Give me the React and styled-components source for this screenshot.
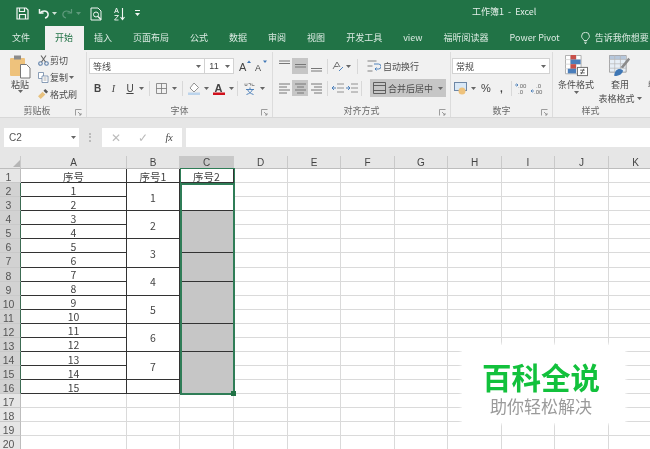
import React from 'react';
import styled, {createGlobalStyle} from 'styled-components';

const GlobalStyle = createGlobalStyle`
html, body {
    margin: 0;
    padding: 0;
    width: 650px;
    height: 449px;
    overflow: hidden;
    background: #fff;
    font-family: "Noto Sans CJK SC", "Liberation Sans", sans-serif;
}
`

const Page = styled.div`
position: relative;
width: 650px;
height: 449px;
overflow: hidden;
display: flex;
flex-direction: column;
filter: blur(0.35px);
`

/* title bar */
const TitleBar = styled.div`
height: 25px;
background: #217346;
display: flex;
align-items: center;
padding: 2px 0 0 15px;
box-sizing: border-box;
color: #e4efe9;
font-size: 9px;
flex-shrink: 0;
`
const QuickSlot = styled.div`
width: ${({w}) => w}px;
height: 14px;
display: flex;
align-items: center;
justify-content: center;
flex-shrink: 0;
`
const Title = styled.div`
margin: 0 0 5px 327px;
white-space: pre;
line-height: 13px;
`

/* tabs */
const TabBar = styled.div`
height: 25px;
background: #217346;
display: flex;
align-items: flex-end;
padding-left: 1.5px;
flex-shrink: 0;
overflow: hidden;
`
const Tab = styled.div`
height: 24px;
line-height: 22px;
padding: 0 10.5px;
font-size: 9px;
white-space: nowrap;
flex-shrink: 0;
margin-right: ${({gap}) => gap || 0}px;
background: ${({active}) => active ? '#f1f1f1' : 'transparent'};
color: ${({active}) => active ? '#217346' : '#dcebe3'};
display: flex;
align-items: center;
gap: 5px;
`

/* ribbon */
const Ribbon = styled.div`
height: 68px;
background: #f1f1f1;
border-bottom: 1px solid #d8d8d8;
box-sizing: border-box;
display: flex;
flex-shrink: 0;
overflow: hidden;
color: #4c4c4c;
font-size: 9px;
`
const Group = styled.div`
width: ${({w}) => w}px;
flex-shrink: 0;
box-sizing: border-box;
border-right: ${({last}) => last ? 'none' : '1px solid #dcdcdc'};
margin-top: 2px;
display: flex;
flex-direction: column;
`
const GroupBody = styled.div`
flex: 1;
display: ${({inline}) => inline ? 'flex' : 'block'};
padding-left: ${({left}) => left || 0}px;
padding-top: ${({top}) => top ?? 6}px;
min-height: 0;
`
const GroupLabel = styled.div`
height: 13px;
line-height: 13px;
font-size: 9px;
color: #6a6a6a;
display: flex;
justify-content: center;
position: relative;
padding-right: ${({shift}) => shift || 0}px;
`
const Launcher = styled.svg`
position: absolute;
right: 4px;
top: 5px;
`
const PasteColumn = styled.div`
width: 22px;
display: flex;
flex-direction: column;
align-items: center;
line-height: 11px;
`
const CopyColumn = styled.div`
margin-left: 7px;
display: flex;
flex-direction: column;
gap: 4px;
margin-top: -1px;
`
const CopyRow = styled.div`
height: 13px;
display: flex;
align-items: center;
gap: 1px;
white-space: nowrap;
`
const ToolRow = styled.div`
height: ${({h}) => h || 16}px;
display: flex;
align-items: center;
margin-top: ${({mt}) => mt || 0}px;
margin-left: ${({ml}) => ml || 0}px;
`
const Combo = styled.div`
width: ${({w}) => w}px;
height: 16px;
background: #fff;
border: 1px solid #d2d2d2;
box-sizing: border-box;
margin-left: -1px;
display: flex;
align-items: center;
justify-content: space-between;
padding: 0 3px;
font-size: 9px;
flex-shrink: 0;
`
const Slot = styled.div`
width: ${({w}) => w || 16}px;
height: ${({h}) => h || 16}px;
display: flex;
align-items: center;
justify-content: center;
flex-shrink: 0;
background: ${({on}) => on ? '#c6c6c6' : 'transparent'};
font-family: ${({serif}) => serif ? '"Liberation Serif", serif' : '"Liberation Sans", sans-serif'};
font-size: ${({fs}) => fs || 10}px;
font-weight: ${({bold}) => bold ? 700 : 400};
font-style: ${({italic}) => italic ? 'italic' : 'normal'};
text-decoration: ${({under}) => under ? 'underline' : 'none'};
color: ${({faint}) => faint ? '#bbb' : '#444'};
`
const Sep = styled.div`
width: 1px;
height: 15px;
background: #d8d8d8;
margin: 0 ${({m}) => m ?? 3}px;
flex-shrink: 0;
`
const TextTool = styled.div`
display: flex;
align-items: center;
gap: 2px;
white-space: nowrap;
margin-left: ${({ml}) => ml || 0}px;
`
const MergeButton = styled.div`
width: 76px;
height: 18px;
background: #c6c6c6;
margin-left: 6px;
display: flex;
align-items: center;
gap: 2px;
padding-left: 3px;
box-sizing: border-box;
white-space: nowrap;
flex-shrink: 0;
`
const BigTool = styled.div`
width: ${({w}) => w}px;
flex-shrink: 0;
display: flex;
flex-direction: column;
align-items: center;
line-height: 11.5px;
white-space: nowrap;
`
const BigLabel = styled.div`
margin-top: 2px;
display: flex;
align-items: center;
gap: 2px;
`

/* formula bar */
const FormulaArea = styled.div`
height: 38px;
background: #e6e6e6;
display: flex;
padding: 10px 0 0 4px;
box-sizing: border-box;
flex-shrink: 0;
`
const FormulaBox = styled.div`
height: 19px;
background: #fff;
display: flex;
align-items: center;
box-sizing: border-box;
width: ${({w}) => w}px;
margin-left: ${({ml}) => ml || 0}px;
flex-grow: ${({grow}) => grow ? 1 : 0};
`
const NameText = styled.div`
flex: 1;
padding-left: 5px;
font: 10px "Liberation Sans", sans-serif;
color: #555;
`
const Grip = styled.div`
width: 2px;
height: 9px;
margin: 5px 0 0 10px;
border-left: 2px dotted #bbb;
`

/* sheet */
const Sheet = styled.div`
position: relative;
flex: 1;
display: grid;
grid-template-columns: 21px 106px 53px 54px 54px 53px 54px 53px 54px 53px 54px 54px;
grid-auto-rows: 14.08px;
grid-template-rows: 13px;
background: #fff;
font-family: "Noto Sans CJK SC", "Liberation Sans", sans-serif;
overflow: hidden;
`
const ColHead = styled.div`
background: ${({on}) => on ? '#c8c8c8' : '#e6e6e6'};
border-right: 1px solid #c9c9c9;
border-bottom: 1px solid #bdbdbd;
box-sizing: border-box;
text-align: center;
font: 10px/14px "Liberation Sans", sans-serif;
color: #444;
`
const RowHead = styled.div`
background: ${({on}) => on ? '#d2d2d2' : '#e6e6e6'};
border-right: 1px solid ${({on}) => on ? '#3c6b52' : '#bdbdbd'};
border-bottom: 1px solid #c9c9c9;
box-sizing: border-box;
text-align: center;
padding: 1px 3px 0 0;
font: 10.5px/14px "Liberation Sans", sans-serif;
color: #555;
`
const Cell = styled.div`
grid-row: ${({span}) => span ? `span ${span}` : 'auto'};
box-sizing: border-box;
border-right: 1px solid ${({boxed}) => boxed ? '#333' : '#dadada'};
border-bottom: 1px solid ${({boxed}) => boxed ? '#333' : '#dadada'};
background: ${({fill}) => fill ? '#c6c6c6' : '#fff'};
display: flex;
align-items: center;
justify-content: center;
padding-top: 1px;
font-size: 10.5px;
line-height: 13px;
color: #444;
`
const Corner = styled.svg`
display: block;
margin: 4px 0 0 13px;
`
const Selection = styled.div`
position: absolute;
left: 180px;
top: 27px;
width: 55px;
height: 212px;
box-sizing: border-box;
border: 2px solid #2f7d57;
pointer-events: none;
`
const ColumnOutline = styled.div`
position: absolute;
left: 180px;
top: 12px;
width: 55px;
height: 16px;
box-sizing: border-box;
border: 1px solid #2f7d57;
pointer-events: none;
`
const Handle = styled.div`
position: absolute;
right: -3px;
bottom: -3px;
width: 5px;
height: 5px;
background: #217346;
`

/* watermark */
const Watermark = styled.div`
position: absolute;
left: 462px;
top: 345px;
width: 163px;
height: 78px;
padding-right: 5px;
box-sizing: border-box;
background: #fff;
box-shadow: 0 0 3px 1px #fff;
display: flex;
flex-direction: column;
align-items: center;
`
const BrandName = styled.div`
margin-top: 14px;
font-size: 29.5px;
line-height: 34px;
font-weight: 700;
color: #12c13c;
`
const BrandSlogan = styled.div`
margin-top: 3px;
font-size: 17px;
line-height: 20px;
color: #9a9a9a;
`

const Caret = ({color = '#666'}) => (
    <svg width="5" height="3" viewBox="0 0 5 3"><path d="M0 0h5L2.5 3z" fill={color}/></svg>
);

const SaveIcon = () => (
    <svg width="13" height="13" viewBox="0 0 13 13" fill="none" stroke="#f1f6f3" strokeWidth="1.2">
        <path d="M1 1h9l2 2v9H1z"/><path d="M3.5 1v3.5h5V1M3.5 12V7.5h6V12"/>
    </svg>
);
const UndoIcon = ({color}) => (
    <svg width="12" height="11" viewBox="0 0 12 11" fill="none" stroke={color} strokeWidth="1.5">
        <path d="M1.5 1v4h4"/><path d="M2 5c2-2.5 7-3 8 .5.6 2.4-1 4-3 4.5"/>
    </svg>
);
const RedoIcon = ({color}) => (
    <svg width="12" height="11" viewBox="0 0 12 11" fill="none" stroke={color} strokeWidth="1.2">
        <path d="M10.5 1v4h-4"/><path d="M10 5C8 2.5 3 2 2 5.500c-.6 2.400 1 4 3 4.500"/>
    </svg>
);
const PreviewIcon = () => (
    <svg width="13" height="14" viewBox="0 0 13 14" fill="none" stroke="#f1f6f3" strokeWidth="1">
        <path d="M1 1h7l3 3v9H1z"/><circle cx="6" cy="7.500" r="2.500"/><path d="M8 9.500l3 3" strokeWidth="1.500"/>
    </svg>
);
const SortIcon = () => (
    <svg width="13" height="14" viewBox="0 0 13 14" fill="none" stroke="#f1f6f3" strokeWidth="0.9">
        <path d="M1.500 6l2-5 2 5M2.200 4.300h2.600M1.500 8.500h4l-4 4.500h4"/><path d="M9.500 1v11M7.500 10l2 2.500 2-2.500" strokeWidth="1.100"/>
    </svg>
);
const CustomizeIcon = () => (
    <svg width="5" height="7" viewBox="0 0 5 7" fill="#f1f6f3"><path d="M0 0h5v1H0zM0 3h5L2.500 6z"/></svg>
);
const BulbIcon = () => (
    <svg width="9" height="12" viewBox="0 0 9 12" fill="none" stroke="#e4efe9" strokeWidth="0.9">
        <path d="M3 8.500C2.500 7 .6 6.200.6 4.200a3.900 3.900 0 0 1 7.800 0C8.400 6.200 6.500 7 6 8.500zM3.200 10.200h2.600M3.800 11.500h1.400"/>
    </svg>
);
const PasteIcon = () => (
    <svg width="21" height="24" viewBox="0 0 21 24">
        <rect x="0" y="3" width="15" height="18" rx="1" fill="#eec27c"/>
        <rect x="4" y="0.500" width="7" height="4" fill="#8c8c8c"/>
        <path d="M10.500 9.500h6l3.500 3.500v10h-9.500z" fill="#fff" stroke="#777" strokeWidth="1"/>
    </svg>
);
const ScissorsIcon = () => (
    <svg width="11" height="11" viewBox="0 0 11 11" fill="none" stroke="#5c7ea8" strokeWidth="1.100">
        <circle cx="2.500" cy="8.500" r="1.800"/><circle cx="8.500" cy="8.500" r="1.800"/><path d="M3.500 7L8 .5M7.500 7L3 .5" stroke="#666"/>
    </svg>
);
const CopyIcon = () => (
    <svg width="11" height="11" viewBox="0 0 11 11" fill="#fff" stroke="#6d87a6" strokeWidth="0.800">
        <path d="M.5.500h5v6h-5z"/><path d="M4 4h6v6.500H4z"/><path d="M5.500 6h3M5.500 8h3" stroke="#999"/>
    </svg>
);
const BrushIcon = () => (
    <svg width="11" height="11" viewBox="0 0 12 12">
        <path d="M0 8l5-5 3 3-5 5z" fill="#e8c27f"/><path d="M6 2l2-2 3 3-2 2z" fill="#555"/>
    </svg>
);
const LauncherIcon = () => (
    <Launcher width="7" height="7" viewBox="0 0 7 7" fill="none" stroke="#888" strokeWidth="0.800">
        <path d="M.5 6.500v-6h6"/><path d="M3 3l3 3M6 4v2H4"/>
    </Launcher>
);
const GrowFont = ({up}) => (
    <svg width="14" height="12" viewBox="0 0 14 12">
        <text x="1" y="11" fontSize={up ? 11 : 9} fontFamily="Liberation Sans" fill="#444">A</text>
        <path d={up ? 'M9 3l2-2.500L13 3z' : 'M9 .5h4l-2 2.500z'} fill="#3f77b5"/>
    </svg>
);
const BorderIcon = () => (
    <svg width="11" height="11" viewBox="0 0 11 11" fill="none" stroke="#777" strokeWidth="0.800">
        <path d="M.5.500h10v10H.5zM5.500.5v10M.5 5.500h10"/>
    </svg>
);
const FillIcon = () => (
    <svg width="13" height="13" viewBox="0 0 13 13">
        <path d="M6 1l4.500 4.500L6 10 2 6z" fill="#fff" stroke="#777" strokeWidth="0.800"/>
        <rect x="0" y="10.500" width="12" height="2.500" fill="#bcd4ec"/>
    </svg>
);
const FontColorIcon = () => (
    <svg width="12" height="13" viewBox="0 0 12 13">
        <text x="1.500" y="9.500" fontSize="11" fontFamily="Liberation Sans" fontWeight="700" fill="#444">A</text>
        <rect x="0" y="10.500" width="12" height="2.500" fill="#d0101c"/>
    </svg>
);
const PhoneticIcon = () => (
    <svg width="12" height="13" viewBox="0 0 12 13" fill="none" stroke="#3f77b5" strokeWidth="0.900">
        <path d="M1 1.500v2h2v-2M4.500 1.500h2v2M8 1.500v2h2.500" stroke="#888"/><path d="M6 5.500v1.500M2 7.500h8M3.500 7.500c1 2.500 3 4 6 5M8.500 7.500c-1 2.500-3 4-6 5"/>
    </svg>
);
const AlignLines = ({rows}) => (
    <svg width="11" height="12" viewBox="0 0 11 12" stroke="#777" strokeWidth="1">
        {rows.map(([x1, x2, y]) => <line key={y} x1={x1} x2={x2} y1={y} y2={y}/>)}
    </svg>
);
const OrientIcon = () => (
    <svg width="12" height="12" viewBox="0 0 12 12" fill="none" stroke="#666" strokeWidth="0.900">
        <path d="M1 9l4-7 3 5M2.500 6.500l4 0"/><path d="M7 11l4-4" stroke="#3f77b5"/>
    </svg>
);
const WrapIcon = () => (
    <svg width="14" height="12" viewBox="0 0 14 12" fill="none" stroke="#777" strokeWidth="0.900">
        <path d="M.5 1h9M.5 6h5M.5 11h5"/><path d="M8 9h3.500a1.500 1.500 0 0 0 0-5H7M9.500 7.500L8 9l1.500 1.500" stroke="#3f77b5"/>
    </svg>
);
const IndentIcon = ({flip}) => (
    <svg width="12" height="10" viewBox="0 0 12 10" fill="none" stroke="#888" strokeWidth="0.900">
        <path d="M5 1h7M5 5h7M5 9h7"/><path d={flip ? 'M4 5H0M2 3l2 2-2 2' : 'M0 5h4M2 3L0 5l2 2'} stroke="#3f77b5"/>
    </svg>
);
const MergeIcon = () => (
    <svg width="13" height="12" viewBox="0 0 13 12" fill="none" stroke="#555" strokeWidth="0.900">
        <path d="M.5.500h12v11H.5zM.5 3.500h12M.5 8.500h12"/>
    </svg>
);
const CurrencyIcon = () => (
    <svg width="14" height="13" viewBox="0 0 14 13">
        <rect x="0.500" y="0.500" width="12" height="8" fill="#d9e8f6" stroke="#6d87a6"/>
        <circle cx="8" cy="9" r="3.500" fill="#eec27c"/>
    </svg>
);
const DecimalIcon = ({more}) => (
    <svg width="14" height="12" viewBox="0 0 14 12">
        <text x={more ? 5 : 3} y="5.500" fontSize="6" fontFamily="Liberation Sans" fill="#666">{more ? '.0' : '.00'}</text>
        <text x="3" y="11.500" fontSize="6" fontFamily="Liberation Sans" fill="#666">{more ? '.00' : '.0'}</text>
        <path d={more ? 'M0 9h3M1.500 7.500L0 9l1.500 1.500' : 'M0 3h3M1.500 1.500L3 3 1.500 4.500'} stroke="#3f77b5" strokeWidth="0.800" fill="none"/>
    </svg>
);
const ConditionalIcon = () => (
    <svg width="23" height="22" viewBox="0 0 25 24">
        <path d="M.5.500h17v20H.5z" fill="#fff" stroke="#aaa"/>
        <path d="M0 5h18M0 10h18M0 15h18M6 0v21M12 0v21" stroke="#ccc" strokeWidth="0.800"/>
        <rect x="6" y="0" width="6" height="5" fill="#c8504a"/>
        <rect x="6" y="5" width="11" height="5" fill="#4a7ebb"/>
        <rect x="6" y="10" width="6" height="5" fill="#c8504a"/>
        <rect x="3" y="15" width="9" height="5" fill="#4a7ebb"/>
        <rect x="13.500" y="13.500" width="11" height="9" fill="#fff" stroke="#666"/>
        <path d="M16.500 16.500h5M16.500 19.500h5M20.500 15l-3 6" stroke="#333" strokeWidth="0.800"/>
    </svg>
);
const TableIcon = () => (
    <svg width="22" height="22" viewBox="0 0 25 25">
        <path d="M.5.500h19v19H.5z" fill="#e6eef6" stroke="#999"/>
        <rect x="1" y="1" width="18" height="4" fill="#b6c7dc"/>
        <path d="M0 5h20M0 10h20M0 15h20M6.500 0v20M13 0v20" stroke="#b5b5b5" strokeWidth="0.800"/>
        <path d="M22 3l2 2-8 10-3-1z" fill="#8a8a8a"/>
        <path d="M6 24c0-5 3-8 6-8 2 0 3 1 4 2-1 3-3 6-10 6z" fill="#3f77b5"/>
    </svg>
);

const rowHeights = Array.from({length: 20}, (_, i) => i + 1);
const columns = ['A', 'B', 'C', 'D', 'E', 'F', 'G', 'H', 'I', 'J', 'K'];
const tabs = ['插入', '页面布局', '公式', '数据', '审阅', '视图', '开发工具', 'view', '福昕阅读器', 'Power Pivot'];
const mergedB = {2: '1', 4: '2', 6: '3', 8: '4', 10: '5', 12: '6', 14: '7'};
// merged blocks in column C as the borders show them: start row -> rows spanned
const mergedC = {2: 2, 4: 3, 7: 2, 9: 3, 12: 2, 14: 3};

const SheetCells = () => {
    const cells = [];
    rowHeights.forEach(row => {
        cells.push(<RowHead key={`h${row}`} on={row >= 2 && row <= 16}>{row}</RowHead>);
        if (row === 1) {
            cells.push(<Cell key="a1" boxed>序号</Cell>);
            cells.push(<Cell key="b1" boxed>序号1</Cell>);
            cells.push(<Cell key="c1" boxed>序号2</Cell>);
        } else if (row <= 16) {
            cells.push(<Cell key={`a${row}`} boxed>{row - 1}</Cell>);
            if (mergedB[row]) cells.push(<Cell key={`b${row}`} boxed span={2}>{mergedB[row]}</Cell>);
            if (row === 16) cells.push(<Cell key="b16" boxed/>);
            if (mergedC[row]) cells.push(<Cell key={`c${row}`} boxed fill={row > 2} span={mergedC[row]}/>);
        } else {
            cells.push(<Cell key={`a${row}`}/>);
            cells.push(<Cell key={`b${row}`}/>);
            cells.push(<Cell key={`c${row}`}/>);
        }
        columns.slice(3).forEach(col => cells.push(<Cell key={`${col}${row}`}/>));
    });
    return cells;
};

const App = () => (
    <Page>
        <GlobalStyle/>
        <TitleBar>
            <QuickSlot w={15}><SaveIcon/></QuickSlot>
            <QuickSlot w={8}/>
            <QuickSlot w={12}><UndoIcon color="#f1f6f3"/></QuickSlot>
            <QuickSlot w={9}><Caret color="#cfe0d6"/></QuickSlot>
            <QuickSlot w={15}><RedoIcon color="#5f9a7c"/></QuickSlot>
            <QuickSlot w={9}><Caret color="#5f9a7c"/></QuickSlot>
            <QuickSlot w={26}><PreviewIcon/></QuickSlot>
            <QuickSlot w={20}><SortIcon/></QuickSlot>
            <QuickSlot w={16}><CustomizeIcon/></QuickSlot>
            <Title>工作簿1  -  Excel</Title>
        </TitleBar>
        <TabBar>
            <Tab gap={4}>文件</Tab>
            <Tab active>开始</Tab>
            {tabs.map(t => <Tab key={t}>{t}</Tab>)}
            <Tab><BulbIcon/>告诉我你想要</Tab>
        </TabBar>
        <Ribbon>
            <Group w={87}>
                <GroupBody inline left={9} top={3}>
                    <PasteColumn>
                        <PasteIcon/>
                        <span>粘贴</span>
                        <Caret/>
                    </PasteColumn>
                    <CopyColumn>
                        <CopyRow><ScissorsIcon/>剪切</CopyRow>
                        <CopyRow><CopyIcon/>复制 <Caret/></CopyRow>
                        <CopyRow><BrushIcon/>格式刷</CopyRow>
                    </CopyColumn>
                </GroupBody>
                <GroupLabel shift={12}>剪贴板<LauncherIcon/></GroupLabel>
            </Group>
            <Group w={186}>
                <GroupBody left={3}>
                    <ToolRow>
                        <Combo w={116}>等线<Caret/></Combo>
                        <Combo w={30}><Slot w={12} fs={9}>11</Slot><Caret/></Combo>
                        <Slot w={3}/>
                        <Slot w={15}><GrowFont up/></Slot>
                        <Slot w={17}><GrowFont/></Slot>
                    </ToolRow>
                    <ToolRow mt={6}>
                        <Slot w={15} bold>B</Slot>
                        <Slot w={17} italic serif>I</Slot>
                        <Slot w={16} under>U</Slot>
                        <Slot w={7}><Caret/></Slot>
                        <Sep m={4}/>
                        <Slot w={15}><BorderIcon/></Slot>
                        <Slot w={10}><Caret/></Slot>
                        <Sep m={3}/>
                        <Slot w={16}><FillIcon/></Slot>
                        <Slot w={8}><Caret/></Slot>
                        <Slot w={18}><FontColorIcon/></Slot>
                        <Slot w={6}><Caret/></Slot>
                        <Sep m={3}/>
                        <Slot w={18}><PhoneticIcon/></Slot>
                        <Slot w={6}><Caret/></Slot>
                    </ToolRow>
                </GroupBody>
                <GroupLabel>字体<LauncherIcon/></GroupLabel>
            </Group>
            <Group w={178}>
                <GroupBody left={3}>
                    <ToolRow>
                        <Slot><AlignLines rows={[[0, 11, 1], [0, 11, 3.5]]}/></Slot>
                        <Slot on><AlignLines rows={[[0, 11, 4.5], [0, 11, 7]]}/></Slot>
                        <Slot><AlignLines rows={[[0, 11, 8.5], [0, 11, 11]]}/></Slot>
                        <Sep m={3}/>
                        <Slot w={14}><OrientIcon/></Slot>
                        <Slot w={6}><Caret/></Slot>
                        <Sep m={6}/>
                        <TextTool ml={3}><WrapIcon/>自动换行</TextTool>
                    </ToolRow>
                    <ToolRow mt={6}>
                        <Slot><AlignLines rows={[[0, 11, 2], [0, 8, 5], [0, 11, 8], [0, 8, 11]]}/></Slot>
                        <Slot on><AlignLines rows={[[0, 11, 2], [2, 9, 5], [0, 11, 8], [2, 9, 11]]}/></Slot>
                        <Slot><AlignLines rows={[[0, 11, 2], [3, 11, 5], [0, 11, 8], [3, 11, 11]]}/></Slot>
                        <Sep m={3}/>
                        <Slot w={14}><IndentIcon/></Slot>
                        <Slot w={14}><IndentIcon flip/></Slot>
                        <Sep m={2}/>
                        <MergeButton><MergeIcon/>合并后居中<Slot w={10}><Caret/></Slot></MergeButton>
                    </ToolRow>
                </GroupBody>
                <GroupLabel>对齐方式<LauncherIcon/></GroupLabel>
            </Group>
            <Group w={102}>
                <GroupBody left={2}>
                    <ToolRow>
                        <Combo w={98}>常规<Caret/></Combo>
                    </ToolRow>
                    <ToolRow mt={6}>
                        <Slot w={15}><CurrencyIcon/></Slot>
                        <Slot w={10}><Caret/></Slot>
                        <Slot w={16} fs={11}>%</Slot>
                        <Slot w={15} bold>,</Slot>
                        <Sep m={2}/>
                        <Slot w={16}><DecimalIcon/></Slot>
                        <Slot w={16}><DecimalIcon more/></Slot>
                    </ToolRow>
                </GroupBody>
                <GroupLabel>数字<LauncherIcon/></GroupLabel>
            </Group>
            <Group w={97} last>
                <GroupBody inline left={1} top={3}>
                    <BigTool w={44}>
                        <ConditionalIcon/>
                        <BigLabel>条件格式</BigLabel>
                        <Caret/>
                    </BigTool>
                    <BigTool w={44}>
                        <TableIcon/>
                        <BigLabel>套用</BigLabel>
                        <BigLabel>表格格式<Caret/></BigLabel>
                    </BigTool>
                    <BigTool w={20}>
                        <Slot w={20} h={22}/>
                        <BigLabel>单</BigLabel>
                    </BigTool>
                </GroupBody>
                <GroupLabel shift={22}>样式</GroupLabel>
            </Group>
        </Ribbon>
        <FormulaArea>
            <FormulaBox w={75}>
                <NameText>C2</NameText>
                <Slot w={12}><Caret/></Slot>
            </FormulaBox>
            <Grip/>
            <FormulaBox w={80} ml={9}>
                <Slot w={27} fs={12} faint>✕</Slot>
                <Slot w={27} fs={12} faint>✓</Slot>
                <Slot w={26} fs={10} italic serif>fx</Slot>
            </FormulaBox>
            <FormulaBox ml={4} grow/>
        </FormulaArea>
        <Sheet>
            <ColHead>
                <Corner width="7" height="7" viewBox="0 0 7 7"><path d="M7 0v7H0z" fill="#b5b5b5"/></Corner>
            </ColHead>
            {columns.map(col => <ColHead key={col} on={col === 'C'}>{col}</ColHead>)}
            <SheetCells/>
            <ColumnOutline/>
            <Selection><Handle/></Selection>
        </Sheet>
        <Watermark>
            <BrandName>百科全说</BrandName>
            <BrandSlogan>助你轻松解决</BrandSlogan>
        </Watermark>
    </Page>
);

export default App;
